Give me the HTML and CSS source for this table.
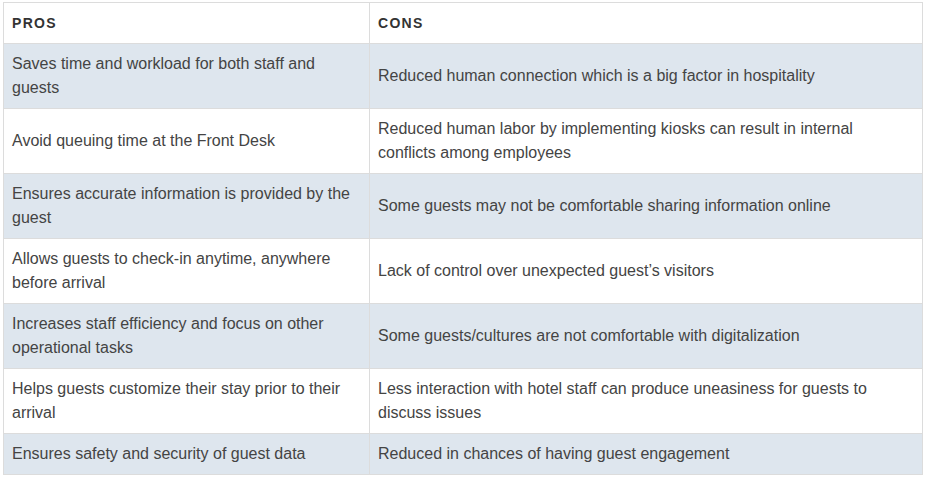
FILE: index.html
```html
<!DOCTYPE html>
<html>
<head>
<meta charset="utf-8">
<link rel="stylesheet" href="styles.css">
</head>
<body>
<table class="pc">
  <colgroup><col class="c1"><col class="c2"></colgroup>
  <thead>
    <tr><th>PROS</th><th>CONS</th></tr>
  </thead>
  <tbody>
    <tr><td>Saves time and workload for both staff and guests</td><td>Reduced human connection which is a big factor in hospitality</td></tr>
    <tr><td>Avoid queuing time at the Front Desk</td><td>Reduced human labor by implementing kiosks can result in internal conflicts among employees</td></tr>
    <tr><td>Ensures accurate information is provided by the guest</td><td>Some guests may not be comfortable sharing information online</td></tr>
    <tr><td>Allows guests to check-in anytime, anywhere before arrival</td><td>Lack of control over unexpected guest’s visitors</td></tr>
    <tr><td>Increases staff efficiency and focus on other operational tasks</td><td>Some guests/cultures are not comfortable with digitalization</td></tr>
    <tr><td>Helps guests customize their stay prior to their arrival</td><td>Less interaction with hotel staff can produce uneasiness for guests to discuss issues</td></tr>
    <tr><td>Ensures safety and security of guest data</td><td>Reduced in chances of having guest engagement</td></tr>
  </tbody>
</table>
</body>
</html>
```
FILE: styles.css
```css
html, body { margin: 0; padding: 0; background: #fff; }
body { padding: 2px 3px; }
.pc {
  border-collapse: collapse;
  width: 920px;
  font-family: "Liberation Sans", Arial, sans-serif;
  font-size: 16px;
  line-height: 24px;
  color: #444;
  table-layout: fixed;
}
.pc .c1 { width: 366px; }
.pc th, .pc td {
  border: 1px solid #dcdcdc;
  padding: 8px 8px 8px 8px;
  text-align: left;
  vertical-align: middle;
}
.pc th {
  font-size: 14px;
  font-weight: bold;
  color: #333;
  letter-spacing: 1.3px;
}
.pc tbody tr:nth-child(odd) td { background: #dee6ee; }
```
